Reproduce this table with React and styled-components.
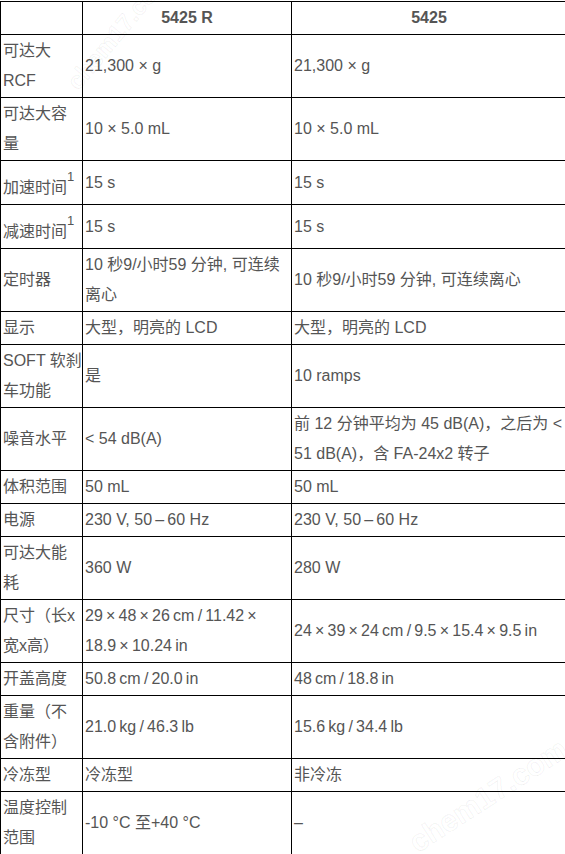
import styled, { createGlobalStyle } from "styled-components";

const GlobalStyle = createGlobalStyle`
  html, body {
    margin: 0;
    padding: 0;
    background: #fff;
  }
  body {
    font-family: "Liberation Sans", "Noto Sans CJK SC", sans-serif;
    overflow: hidden;
  }
`;

const T = "\u2009";

const rows = [
  { label: "可达大RCF", a: "21,300 × g", b: "21,300 × g" },
  { label: "可达大容量", a: "10 × 5.0 mL", b: "10 × 5.0 mL" },
  { label: "加速时间", sup: "1", a: "15 s", b: "15 s" },
  { label: "减速时间", sup: "1", a: "15 s", b: "15 s" },
  {
    label: "定时器",
    a: "10 秒9/小时59 分钟, 可连续离心",
    b: "10 秒9/小时59 分钟, 可连续离心",
  },
  { label: "显示", a: "大型，明亮的 LCD", b: "大型，明亮的 LCD" },
  { label: ["SOFT 软刹", "车功能"], a: "是", b: "10 ramps" },
  {
    label: "噪音水平",
    a: "< 54 dB(A)",
    b: "前 12 分钟平均为 45 dB(A)，之后为 < 51 dB(A)，含 FA-24x2 转子",
  },
  { label: "体积范围", a: "50 mL", b: "50 mL" },
  { label: "电源", a: `230 V, 50${T}–${T}60 Hz`, b: `230 V, 50${T}–${T}60 Hz` },
  { label: "可达大能耗", a: "360 W", b: "280 W" },
  {
    label: "尺寸（长x宽x高）",
    a: `29${T}×${T}48${T}×${T}26${T}cm${T}/${T}11.42${T}× 18.9${T}×${T}10.24${T}in`,
    b: `24${T}×${T}39${T}×${T}24${T}cm${T}/${T}9.5${T}×${T}15.4${T}×${T}9.5${T}in`,
  },
  {
    label: "开盖高度",
    a: `50.8${T}cm${T}/${T}20.0${T}in`,
    b: `48${T}cm${T}/${T}18.8${T}in`,
  },
  {
    label: "重量（不含附件）",
    a: `21.0${T}kg${T}/${T}46.3${T}lb`,
    b: `15.6${T}kg${T}/${T}34.4${T}lb`,
  },
  { label: "冷冻型", a: "冷冻型", b: "非冷冻" },
  { label: "温度控制范围", a: "-10 °C 至+40 °C", b: "–" },
];

const Label = ({ text }) =>
  Array.isArray(text)
    ? text.map((line) => <Line key={line}>{line}</Line>)
    : text;

const App = () => {
  return (
    <Page>
      <GlobalStyle />
      <Table>
        <colgroup>
          <col style={{ width: 82 }} />
          <col style={{ width: 209 }} />
          <col style={{ width: 275 }} />
        </colgroup>
        <thead>
          <tr>
            <HeadCell />
            <HeadCell>5425 R</HeadCell>
            <HeadCell>5425</HeadCell>
          </tr>
        </thead>
        <tbody>
          {rows.map((row, i) => (
            <tr key={i}>
              <Cell>
                <Label text={row.label} />
                {row.sup && <Sup>{row.sup}</Sup>}
              </Cell>
              <Cell>{row.a}</Cell>
              <Cell>{row.b}</Cell>
            </tr>
          ))}
        </tbody>
      </Table>
      <Watermark $top={72} $left={72} $size={24} $angle={-50}>
        chem17.com
      </Watermark>
      <Watermark $top={828} $left={412} $size={30} $angle={-33}>
        chem17.com
      </Watermark>
    </Page>
  );
};

const Page = styled.div`
  position: relative;
  width: 565px;
  height: 854px;
  overflow: hidden;
  padding-top: 1px;
  box-sizing: border-box;
`;

const Table = styled.table`
  width: 566px;
  table-layout: fixed;
  border-collapse: collapse;
  font-size: 16px;
  line-height: 30px;
  color: #555;
`;

const HeadCell = styled.th`
  border: 1px solid #000;
  padding: 1px 2px;
  text-align: center;
  font-weight: bold;
  color: #555;
`;

const Cell = styled.td`
  border: 1px solid #000;
  padding: 1px 2px;
  vertical-align: middle;
  text-align: left;
`;

const Line = styled.span`
  display: block;
  white-space: nowrap;
`;

const Sup = styled.sup`
  font-size: 13px;
  line-height: 30px;
  vertical-align: 12px;
`;

const Watermark = styled.span`
  position: absolute;
  top: ${(p) => p.$top}px;
  left: ${(p) => p.$left}px;
  transform: rotate(${(p) => p.$angle}deg);
  transform-origin: left center;
  font-family: "Liberation Sans", sans-serif;
  font-size: ${(p) => p.$size}px;
  font-weight: bold;
  color: transparent;
  -webkit-text-stroke: 1px rgba(0, 0, 0, 0.06);
  pointer-events: none;
  white-space: nowrap;
`;

export default App;
